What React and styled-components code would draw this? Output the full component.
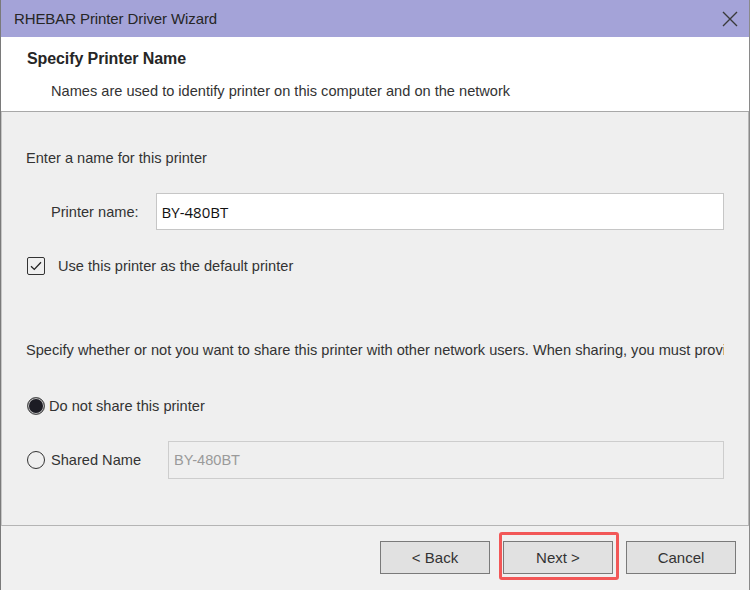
import React from "react";
import styled, { createGlobalStyle } from "styled-components";

const GlobalStyle = createGlobalStyle`
  html, body {
    margin: 0;
    padding: 0;
    background: #efefef;
  }
  body {
    font-family: "Liberation Sans", Arial, sans-serif;
    color: #222;
  }
`;

const App = () => {
  return (
    <>
      <GlobalStyle />
      <Window>
        <TitleBar>
          <TitleText>RHEBAR Printer Driver Wizard</TitleText>
          <CloseButton aria-label="Close">
            <svg width="16" height="16" viewBox="0 0 16 16">
              <path d="M1 1 L15 15 M15 1 L1 15" stroke="#3a3a3a" strokeWidth="1.4" fill="none" />
            </svg>
          </CloseButton>
        </TitleBar>

        <Header>
          <HeaderTitle>Specify Printer Name</HeaderTitle>
          <HeaderSub>Names are used to identify printer on this computer and on the network</HeaderSub>
        </Header>

        <Content>
          <Text>Enter a name for this printer</Text>

          <Row $mt={26} $indent={25}>
            <FieldLabel>Printer name:</FieldLabel>
            <TextInput $left={17}>BY-480BT</TextInput>
          </Row>

          <Row $mt={27} $indent={1}>
            <CheckBox>
              <svg width="12" height="10" viewBox="0 0 12 10">
                <path d="M1 5.2 L4.3 8.4 L11 1.2" stroke="#222" strokeWidth="1.3" fill="none" />
              </svg>
            </CheckBox>
            <OptionLabel $gap={13}>Use this printer as the default printer</OptionLabel>
          </Row>

          <ClipText $mt={66}>
            Specify whether or not you want to share this printer with other network users. When sharing, you must provide a share name.
          </ClipText>

          <Row $mt={38} $indent={1}>
            <Radio $checked />
            <OptionLabel $gap={4}>Do not share this printer</OptionLabel>
          </Row>

          <Row $mt={26} $indent={1}>
            <Radio />
            <OptionLabel $gap={6}>Shared Name</OptionLabel>
            <TextInput $left={27} $disabled>BY-480BT</TextInput>
          </Row>
        </Content>

        <Footer>
          <Button>&lt; Back</Button>
          <Highlighted>
            <Button>Next &gt;</Button>
            <Marker />
          </Highlighted>
          <Button>Cancel</Button>
        </Footer>
      </Window>
    </>
  );
};

const Window = styled.div`
  width: 750px;
  height: 590px;
  box-sizing: border-box;
  border-left: 1px solid #7a7a7a;
  border-right: 1px solid #8a8a8a;
  display: flex;
  flex-direction: column;
  background: #f0f0f0;
  overflow: hidden;
`;

const TitleBar = styled.div`
  height: 37px;
  flex: none;
  background: #a4a3d8;
  display: flex;
  align-items: center;
  justify-content: space-between;
  padding: 0 11px 0 13px;
`;

const TitleText = styled.div`
  font-size: 15px;
  color: #262626;
  letter-spacing: -0.1px;
`;

const CloseButton = styled.div`
  width: 16px;
  height: 16px;
  display: flex;
`;

const Header = styled.div`
  height: 75px;
  flex: none;
  background: #ffffff;
  border-bottom: 1px solid #a8a8a8;
  padding: 13px 0 0 26px;
  box-sizing: border-box;
`;

const HeaderTitle = styled.div`
  font-size: 16px;
  font-weight: bold;
  line-height: 18px;
  color: #262626;
  letter-spacing: -0.1px;
`;

const HeaderSub = styled.div`
  margin: 14px 0 0 24px;
  font-size: 14.6px;
  line-height: 18px;
  color: #333;
`;

const Content = styled.div`
  height: 414px;
  flex: none;
  box-sizing: border-box;
  background: #efefef;
  border-left: 1px solid #c6c6c6;
  border-right: 1px solid #b8b8b8;
  border-bottom: 1px solid #b4b4b4;
  padding: 37px 24px 0 24px;
  display: flex;
  flex-direction: column;
`;

const Text = styled.div`
  font-size: 14.6px;
  line-height: 18px;
  color: #333;
`;

const ClipText = styled(Text)`
  margin-top: ${(p) => p.$mt}px;
  white-space: nowrap;
  overflow: hidden;
`;

const Row = styled.div`
  margin-top: ${(p) => p.$mt}px;
  padding-left: ${(p) => p.$indent}px;
  display: flex;
  align-items: center;
`;

const FieldLabel = styled.span`
  font-size: 14.6px;
  color: #333;
  white-space: nowrap;
`;

const OptionLabel = styled.span`
  margin-left: ${(p) => p.$gap}px;
  font-size: 14.6px;
  line-height: 18px;
  color: #333;
  white-space: nowrap;
`;

const TextInput = styled.div`
  flex: 1;
  margin-left: ${(p) => p.$left}px;
  height: ${(p) => (p.$disabled ? 38 : 37)}px;
  box-sizing: border-box;
  border: 1px solid ${(p) => (p.$disabled ? "#cdcdcd" : "#c6c6c6")};
  background: ${(p) => (p.$disabled ? "#efefef" : "#ffffff")};
  color: ${(p) => (p.$disabled ? "#9a9a9a" : "#111")};
  font-family: ${(p) => (p.$disabled ? '"Liberation Sans", Arial, sans-serif' : '"Open Sans", "Noto Sans", sans-serif')};
  font-size: ${(p) => (p.$disabled ? 14.6 : 15)}px;
  display: flex;
  align-items: center;
  padding-left: 5px;
`;

const CheckBox = styled.div`
  width: 18px;
  height: 18px;
  box-sizing: border-box;
  border: 1.5px solid #333;
  border-radius: 2px;
  display: flex;
  align-items: center;
  justify-content: center;
  flex: none;
`;

const Radio = styled.div`
  width: 18px;
  height: 18px;
  box-sizing: border-box;
  border-radius: 50%;
  border: 1px solid ${(p) => (p.$checked ? "#555" : "#333")};
  background: ${(p) => (p.$checked ? "#1c1c24" : "transparent")};
  box-shadow: ${(p) => (p.$checked ? "inset 0 0 0 1px #bdbdbd" : "none")};
  flex: none;
`;

const Footer = styled.div`
  flex: 1;
  display: flex;
  justify-content: flex-end;
  align-items: flex-start;
  gap: 13px;
  padding: 15px 13px 0 0;
  background: #f0f0f0;
`;

const Button = styled.div`
  width: 110px;
  height: 33px;
  box-sizing: border-box;
  border: 1px solid #7a7a7a;
  background: #e1e1e1;
  display: flex;
  align-items: center;
  justify-content: center;
  font-size: 15px;
  color: #333;
`;

const Highlighted = styled.div`
  position: relative;
`;

const Marker = styled.div`
  position: absolute;
  top: -9px;
  left: -4px;
  right: -6px;
  bottom: -6px;
  border: 3px solid #f25757;
  border-radius: 3px;
  pointer-events: none;
`;

export default App;
